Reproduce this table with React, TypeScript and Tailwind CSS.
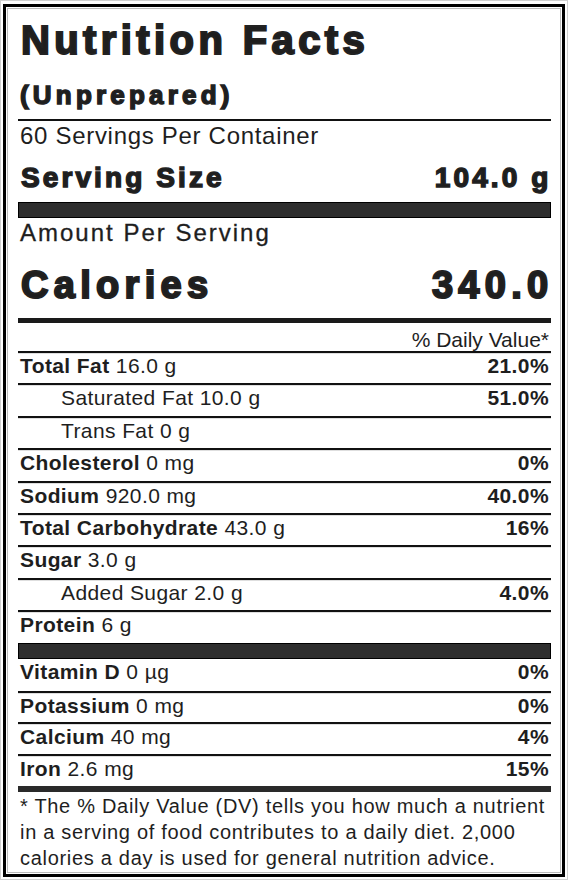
import React from 'react';

type Row = { name: string; amount: string; dv?: string; indent?: boolean };

const macroRows: Row[] = [
  { name: 'Total Fat', amount: '16.0 g', dv: '21.0%' },
  { name: 'Saturated Fat', amount: '10.0 g', dv: '51.0%', indent: true },
  { name: 'Trans Fat', amount: '0 g', indent: true },
  { name: 'Cholesterol', amount: '0 mg', dv: '0%' },
  { name: 'Sodium', amount: '920.0 mg', dv: '40.0%' },
  { name: 'Total Carbohydrate', amount: '43.0 g', dv: '16%' },
  { name: 'Sugar', amount: '3.0 g' },
  { name: 'Added Sugar', amount: '2.0 g', dv: '4.0%', indent: true },
  { name: 'Protein', amount: '6 g' },
];

const vitaminRows: Row[] = [
  { name: 'Potassium', amount: '0 mg', dv: '0%' },
  { name: 'Calcium', amount: '40 mg', dv: '4%' },
  { name: 'Iron', amount: '2.6 mg', dv: '15%' },
];

const RowText: React.FC<{ row: Row }> = ({ row }) => (
  <>
    <span className={row.indent ? 'pl-[43px]' : 'pl-[2px]'}>
      {row.indent ? row.name : <b className="font-bold">{row.name}</b>} {row.amount}
    </span>
    {row.dv && <span className="pr-[2px] font-bold">{row.dv}</span>}
  </>
);

const App: React.FC = () => {
  return (
    <div className="bg-white w-[570px] h-[882px] font-['Liberation_Sans',Arial,sans-serif] text-[#1e1e1e]">
      <div className="border border-[#d0d0d0] pt-[3px] pr-[2px] pb-[2px] pl-[2px] w-[568px] h-[880px]">
        <div className="p-px border-[3px] border-black h-full">
          <div className="flex flex-col pr-[9px] pl-[10px] border border-[#bbbbbb] h-full">
            <h1 className="mt-[9px] pl-[3px] font-bold text-[40px] leading-[44px] tracking-[4.4px] [-webkit-text-stroke:2px_#222]">
              Nutrition Facts
            </h1>
            <h2 className="mt-[17px] pl-[2px] font-bold text-[26px] leading-[32px] tracking-[4.2px] [-webkit-text-stroke:1.5px_#222]">
              (Unprepared)
            </h2>
            <div className="bg-[#111] mt-[8px] h-[2px]"></div>
            <div className="pl-[2px] text-[24px] leading-[30px] tracking-[0.7px]">60 Servings Per Container</div>
            <div className="flex justify-between mt-[10px] px-[2px] font-bold text-[28px] leading-[34px] tracking-[3.1px] [-webkit-text-stroke:1.5px_#222]">
              <span className="pl-px">Serving Size</span>
              <span className="mr-[-2.5px]">104.0 g</span>
            </div>
            <div className="bg-[#2e2e2e] mt-[7px] border border-black h-[16px]"></div>
            <div className="mt-[1px] pl-[2px] text-[24px] leading-[28px] tracking-[2px] [-webkit-text-stroke:0.3px_#1e1e1e]">
              Amount Per Serving
            </div>
            <div className="flex justify-between mt-[16px] px-[2px] font-bold text-[38px] leading-[44px] tracking-[5.3px] [-webkit-text-stroke:2px_#222]">
              <span className="pl-px">Calories</span>
              <span className="mr-[-4.5px]">340.0</span>
            </div>
            <div className="bg-[#1a1a1a] mt-[11px] h-[5px]"></div>
            <div className="pt-[6px] pr-[2px] h-[28px] text-[21px] text-right leading-[22px]">% Daily Value*</div>

            {macroRows.map((row) => (
              <div
                key={row.name}
                className="flex justify-between shadow-[inset_0_1px_0_#dedede] border-[#111] border-t-2 h-[32.4px] text-[21px] leading-[26px] tracking-[0.4px]"
              >
                <RowText row={row} />
              </div>
            ))}

            <div className="bg-[#2e2e2e] border border-black h-[16px]"></div>
            <div className="flex justify-between h-[32px] text-[21px] leading-[26px] tracking-[0.4px]">
              <RowText row={{ name: 'Vitamin D', amount: '0 µg', dv: '0%' }} />
            </div>
            {vitaminRows.map((row) => (
              <div
                key={row.name}
                className="flex justify-between shadow-[inset_0_1px_0_#dedede] border-[#111] border-t-2 h-[31.7px] text-[21px] leading-[26px] tracking-[0.4px]"
              >
                <RowText row={row} />
              </div>
            ))}

            <div className="bg-[#2a2a2a] h-[6px]"></div>
            <p className="pt-[1px] pl-[2px] text-[20px] leading-[26px] tracking-[0.7px] whitespace-nowrap">
              * The % Daily Value (DV) tells you how much a nutrient
              <br />
              in a serving of food contributes to a daily diet. 2,000
              <br />
              calories a day is used for general nutrition advice.
            </p>
          </div>
        </div>
      </div>
    </div>
  );
};

export default App;
